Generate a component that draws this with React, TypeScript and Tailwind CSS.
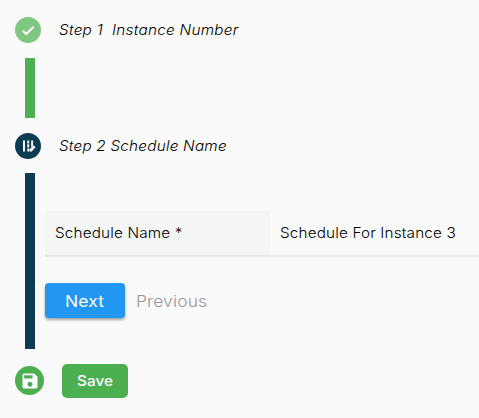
import { MdSave } from "react-icons/md";

export default function App() {
  return (
    <main className="h-[418px] w-[479px] overflow-hidden bg-[#fafafa] pl-[15px] pt-[17px] font-['Inter','Liberation_Sans',sans-serif] text-black">
      <div className="flex h-[26px] items-center">
        <span className="flex size-[26px] items-center justify-center rounded-full bg-[#81c784]">
          <svg viewBox="0 0 16 16" className="size-4" fill="none" stroke="white" strokeWidth="2">
            <path d="M3 8.8 6.3 12 13.7 4.6" />
          </svg>
        </span>
        <p className="ml-[18px] origin-left scale-x-[1.055] whitespace-pre text-[14.5px] font-light italic leading-5 tracking-[0.25px]">Step 1  Instance Number</p>
      </div>
      <div className="ml-[10px] mt-[15px] h-[60px] w-[10px] bg-[#4caf50]" />
      <div className="mt-[15px] flex h-[26px] items-center">
        <span className="flex size-[26px] items-center justify-center rounded-full bg-[#0d3b54]">
          <svg viewBox="0 0 16 16" className="size-4" fill="white">
            <path d="M3 2.5h2v11H3zM7.3 2.5h1.9v2.9H7.3zM7.3 6.3h1.9v3.2H7.3zM7.3 10.4h1.9v3.1H7.3zM11.2 2.5h1.9v5l-1.9 2z" />
            <path d="m9.6 11.2 4-4 2 2-4 4.3h-2z" />
          </svg>
        </span>
        <p className="ml-[18px] origin-left scale-x-[1.055] whitespace-pre text-[14.5px] font-light italic leading-5 tracking-[0.2px]">Step 2 Schedule Name</p>
      </div>
      <div className="mt-[14px] flex h-[175.5px] pl-[10px]">
        <div className="w-[10px] bg-[#0d3b54]" />
        <div className="ml-[10px] flex-1 pt-[38px]">
          <div className="flex h-[46px] border-b-2 border-[#e9eaea] text-[14.5px] font-light">
            <div className="flex w-[225px] items-center bg-[#f4f6f6] pl-[10px] tracking-[0.15px]">
              <span className="origin-left scale-x-[1.055]">Schedule Name *</span>
            </div>
            <div className="flex items-center whitespace-nowrap pl-[10px] tracking-[0.15px]">
              <span className="origin-left scale-x-[1.055]">Schedule For Instance 3</span>
            </div>
          </div>
          <div className="mt-[26px] flex h-[35px] items-center">
            <button className="h-[35px] w-20 rounded-[4px] bg-[#2196f3] pt-px text-[16.5px] tracking-[0.2px] text-white shadow-[0_2px_3px_rgba(0,0,0,0.35)]">
              <span className="inline-block scale-x-[1.055]">Next</span>
            </button>
            <button className="ml-[10.5px] origin-left scale-x-[1.055] pt-px text-[16.5px] font-light tracking-[0.15px] text-[#979797]">Previous</button>
          </div>
        </div>
      </div>
      <div className="mt-[14.5px] flex h-[35px] items-center">
        <span className="flex size-[29px] items-center justify-center rounded-full bg-[#4caf50] text-white">
          <MdSave size={20} />
        </span>
        <button className="ml-[18px] h-[34px] w-[66px] rounded-[5px] bg-[#4caf50] pt-px text-[14.5px] font-medium text-white">
          <span className="inline-block scale-x-[1.055]">Save</span>
        </button>
      </div>
    </main>
  );
}
